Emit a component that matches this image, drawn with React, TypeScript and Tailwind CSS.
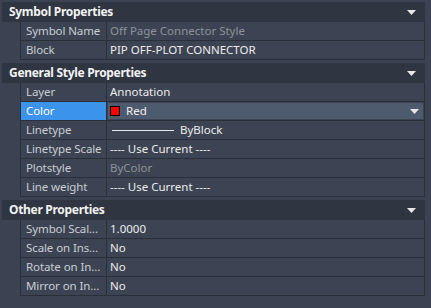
import React from "react";

type Row = {
  label: string;
  value: React.ReactNode;
  dim?: boolean;
  selected?: boolean;
};

const Caret = () => (
  <svg width="9" height="5" viewBox="0 0 9 5" className="shrink-0">
    <path d="M0 0 H9 L4.5 5 Z" fill="#e8e8e8" />
  </svg>
);

const Section = ({ title, rows }: { title: string; rows: Row[] }) => (
  <div>
    <div className="flex h-[20px] items-center justify-between bg-[#2f3541] pl-[7px] pr-[9px]">
      <span className="text-[12px] font-bold tracking-[-0.3px] text-[#f2f2f2]">{title}</span>
      <Caret />
    </div>
    <div className="pl-[18px]">
      {rows.map((r) => (
        <div
          key={r.label}
          className="flex h-[19px] border-b border-l border-r border-[#2a3039] bg-[#3c4453]"
        >
          <div
            className={`flex w-[86px] shrink-0 items-center border-r border-[#2a3039] pl-[5px] tracking-[-0.1px] whitespace-nowrap overflow-hidden ${
              r.selected ? "bg-[#3b93ea] text-white" : "text-[#c9cdd3]"
            }`}
          >
            {r.label}
          </div>
          {r.selected ? (
            <div className="m-[1px] flex flex-1 items-center justify-between bg-[#4e5a6d] pl-[2px] pr-[4px]">
              <div className="flex items-center">
                <span className="h-[10px] w-[10px] border border-black bg-[#ff0000]" />
                <span className="ml-[6px] text-[#eeeeee]">{r.value}</span>
              </div>
              <Caret />
            </div>
          ) : (
            <div
              className={`flex flex-1 items-center pl-[3px] whitespace-nowrap overflow-hidden ${
                r.dim ? "text-[#8c929b]" : "text-[#ececec]"
              }`}
            >
              {r.value}
            </div>
          )}
        </div>
      ))}
    </div>
  </div>
);

export default function App() {
  return (
    <div
      className="h-[308px] w-[431px] bg-[#3b4352] pl-[2px] pr-[6px] pt-[2px] text-[11.5px] leading-none"
      style={{ fontFamily: '"Noto Sans", "Open Sans", sans-serif' }}
    >
      <div className="flex flex-col gap-[3px]">
        <Section
          title="Symbol Properties"
          rows={[
            { label: "Symbol Name", value: "Off Page Connector Style", dim: true },
            { label: "Block", value: "PIP OFF-PLOT CONNECTOR" },
          ]}
        />
        <Section
          title="General Style Properties"
          rows={[
            { label: "Layer", value: "Annotation" },
            { label: "Color", value: "Red", selected: true },
            {
              label: "Linetype",
              value: (
                <span className="flex items-center">
                  <span className="ml-[2px] h-[1px] w-[62px] bg-[#e8e8e8]" />
                  <span className="ml-[6px]">ByBlock</span>
                </span>
              ),
            },
            { label: "Linetype Scale", value: "---- Use Current ----" },
            { label: "Plotstyle", value: "ByColor", dim: true },
            { label: "Line weight", value: "---- Use Current ----" },
          ]}
        />
        <Section
          title="Other Properties"
          rows={[
            { label: "Symbol Scal...", value: "1.0000" },
            { label: "Scale on Ins...", value: "No" },
            { label: "Rotate on In...", value: "No" },
            { label: "Mirror on In...", value: "No" },
          ]}
        />
      </div>
    </div>
  );
}
